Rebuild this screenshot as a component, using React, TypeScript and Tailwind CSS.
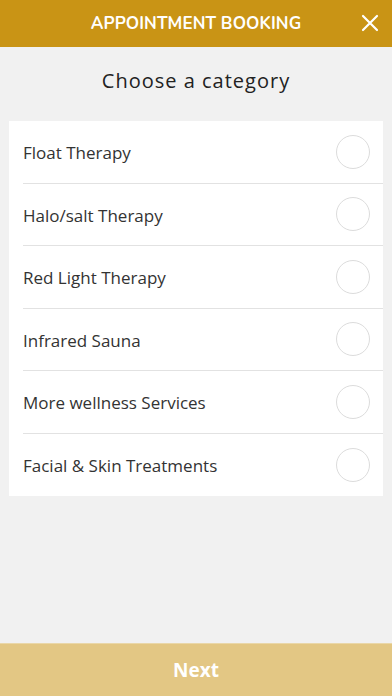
import React, { useState } from "react";

const CATEGORIES = [
  "Float Therapy",
  "Halo/salt Therapy",
  "Red Light Therapy",
  "Infrared Sauna",
  "More wellness Services",
  "Facial & Skin Treatments",
];

export default function App() {
  const [selected, setSelected] = useState<number | null>(null);

  return (
    <div className="flex h-[696px] w-full flex-col bg-[#f1f1f1] font-['Open_Sans',sans-serif]">
      <header className="relative flex h-[47px] shrink-0 items-center justify-center bg-[#c99415]">
        <h1 className="font-['Nunito','Open_Sans',sans-serif] text-[17px] font-bold tracking-[0.1px] text-white">
          APPOINTMENT BOOKING
        </h1>
        <button className="absolute right-[13px] top-[14px] text-white" aria-label="Close">
          <svg width="18" height="18" viewBox="0 0 18 18" fill="none" stroke="currentColor" strokeWidth="2.2" strokeLinecap="round">
            <path d="M2 2 L16 16 M16 2 L2 16" />
          </svg>
        </button>
      </header>

      <main className="flex-1">
        <h2 className="pt-[20px] pb-[26px] text-center text-[20px] leading-[28px] tracking-[1px] text-[#222]">
          Choose a category
        </h2>

        <ul className="mx-[9px] bg-white">
          {CATEGORIES.map((c, i) => (
            <li key={c} className="pl-[14px]">
              <button
                onClick={() => setSelected(i)}
                className={`flex h-[62.5px] w-full items-center justify-between pr-[13px] text-left ${
                  i < CATEGORIES.length - 1 ? "border-b border-[#e2e2e2]" : ""
                }`}
              >
                <span className="pt-[2px] text-[17px] text-[#333]">{c}</span>
                <span className="flex h-[34px] w-[34px] items-center justify-center rounded-full border border-[#dcdcdc]">
                  {selected === i && <span className="h-[18px] w-[18px] rounded-full bg-[#c99415]" />}
                </span>
              </button>
            </li>
          ))}
        </ul>
      </main>

      <footer className="flex h-[53px] shrink-0 items-center justify-center border-t border-[#ead7a8] bg-[#e3c784]">
        <span className="text-[19px] font-bold text-white">Next</span>
      </footer>
    </div>
  );
}
